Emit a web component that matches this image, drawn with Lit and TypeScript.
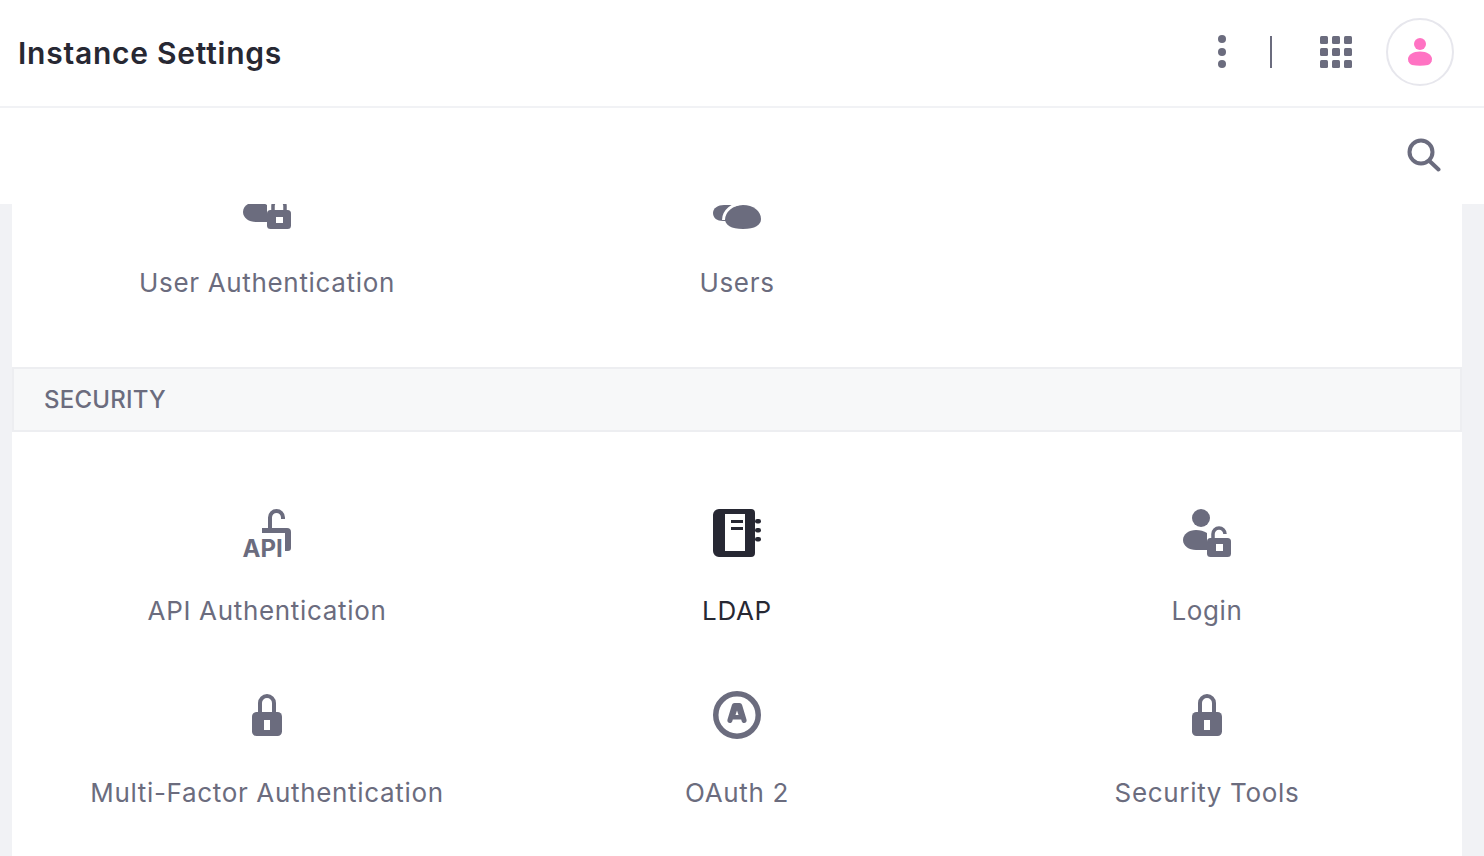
import { LitElement, html, css, svg } from "lit";
import { customElement } from "lit/decorators.js";

const closedLock = svg`<path d="M17 21V12a7 7 0 0 1 14 0v9" fill="none" stroke="currentColor" stroke-width="4"/><rect x="9" y="21" width="30" height="24" rx="4.500" fill="currentColor"/><rect x="21" y="29" width="6" height="10" fill="#fff"/>`;

const icons: Record<string, unknown> = {
  userAuth: svg`<circle cx="18" cy="9" r="9" fill="currentColor"/><path d="M0 31c0-6 6-10 13-10 4 0 8 1 11 3v17c-3 0-7 0-11 0C6 41 0 37 0 31z" fill="currentColor"/><path d="M30 29v-4a6 6 0 0 1 12 0v4" fill="none" stroke="currentColor" stroke-width="3.500"/><rect x="24" y="29" width="24" height="19" rx="3.500" fill="currentColor"/><rect x="33" y="36" width="7" height="6" fill="#fff"/>`,
  users: svg`<circle cx="15" cy="13" r="8" fill="currentColor"/><path d="M0 32c0-5 5-8 11-8h11v16H10C4 40 0 37 0 32z" fill="currentColor"/><path d="M12 38c0-8 8-14 18-14s18 6 18 14c0 6-6 10-18 10S12 44 12 38z" fill="currentColor" stroke="#fff" stroke-width="0"/><path d="M10.500 39c0-9 9-16.500 19.500-16.500" fill="none" stroke="#fff" stroke-width="3"/>`,
  api: svg`<path d="M27 20V8.500a6.500 6.500 0 0 1 13 0V10" fill="none" stroke="currentColor" stroke-width="4"/><path d="M19 19h25a4 4 0 0 1 4 4v16a3 3 0 0 1-3 3h-3V24H19z" fill="currentColor"/><text x="-0.500" y="48" font-family="Inter, sans-serif" font-size="24" font-weight="700" fill="currentColor">API</text>`,
  ldap: svg`<path fill-rule="evenodd" d="M6 0h32a4 4 0 0 1 4 4v40a4 4 0 0 1-4 4H6a6 6 0 0 1-6-6V6a6 6 0 0 1 6-6zM12 5v37h20V5z" fill="currentColor"/><rect x="18" y="11" width="12" height="3" fill="currentColor"/><rect x="18" y="18" width="12" height="3" fill="currentColor"/><rect x="42" y="10" width="6" height="4.500" rx="2.200" fill="currentColor"/><rect x="42" y="19" width="6" height="4.500" rx="2.200" fill="currentColor"/><rect x="42" y="28" width="6" height="4.500" rx="2.200" fill="currentColor"/>`,
  login: svg`<circle cx="18" cy="9" r="9" fill="currentColor"/><path d="M0 31c0-6 6-10 13-10 4 0 8 1 11 3v17c-3 0-7 0-11 0C6 41 0 37 0 31z" fill="currentColor"/><path d="M30 30V25a6 6 0 0 1 12 0" fill="none" stroke="currentColor" stroke-width="3.500"/><rect x="24" y="29" width="24" height="19" rx="3.500" fill="currentColor"/><rect x="33" y="35" width="7" height="7" fill="#fff"/>`,
  lock: closedLock,
  oauth: svg`<circle cx="24" cy="24" r="21.250" fill="none" stroke="currentColor" stroke-width="5.500"/><path fill-rule="evenodd" d="M21.500 12h5c1.200 0 2.200.8 2.600 2l4.400 14.500c.6 2-.7 3.500-2.400 3.500-1.200 0-2.100-.7-2.400-1.800l-.5-1.700h-8.400l-.5 1.700c-.3 1.100-1.200 1.800-2.400 1.800-1.700 0-3-1.500-2.400-3.500l4.400-14.500c.4-1.200 1.400-2 2.600-2zM24 19.500l-1.500 4.500h3z" fill="currentColor"/>`,
};

interface Item { label: string; icon: string; active?: boolean }

const first: Item[] = [
  { label: "User Authentication", icon: "userAuth" },
  { label: "Users", icon: "users" },
];
const security: Item[] = [
  { label: "API Authentication", icon: "api" },
  { label: "LDAP", icon: "ldap", active: true },
  { label: "Login", icon: "login" },
  { label: "Multi-Factor Authentication", icon: "lock" },
  { label: "OAuth 2", icon: "oauth" },
  { label: "Security Tools", icon: "lock" },
];

@customElement("app-root")
export class AppRoot extends LitElement {
  static styles = css`
    :host {
      display: flex;
      flex-direction: column;
      height: 856px;
      overflow: hidden;
      font-family: Inter, "Liberation Sans", sans-serif;
      color: #6b6c7e;
      background: #f1f2f5;
    }
    .top {
      flex: none;
      height: 104px;
      display: flex;
      align-items: center;
      padding: 0 30px 2px 18px;
      background: #fff;
      border-bottom: 2px solid #f1f2f5;
    }
    h1 {
      margin: 0;
      padding-top: 2px;
      flex: 1;
      font-size: 30px;
      font-weight: 600;
      letter-spacing: 0.76px;
      color: #272833;
    }
    .top svg { display: block; }
    .kebab { margin-right: 44px; }
    .sep { width: 2px; height: 32px; background: #6b6c7e; margin-right: 48px; }
    .apps { margin-right: 34px; }
    .avatar {
      width: 68px;
      height: 68px;
      box-sizing: border-box;
      border: 2px solid #e7e7ed;
      border-radius: 50%;
      display: flex;
      align-items: center;
      justify-content: center;
    }
    .sub {
      flex: none;
      height: 94px;
      display: flex;
      align-items: center;
      justify-content: flex-end;
      padding: 0 43px 2px 0;
      background: #fff;
    }
    .main {
      flex: 1;
      min-height: 0;
      overflow: hidden;
      padding: 0 22px 0 12px;
    }
    .sheet {
      height: 100%;
      overflow: hidden;
      background: #fff;
    }
    .grid {
      display: grid;
      grid-template-columns: repeat(3, 470px);
      padding: 0 20px;
    }
    .grid.first { margin-top: -23px; padding-bottom: 4px; }
    .grid.second { padding-top: 77px; }
    .item {
      height: 182px;
      display: flex;
      flex-direction: column;
      align-items: center;
    }
    .item svg { display: block; color: #6b6c7e; }
    .item span {
      margin-top: 36px;
      font-size: 26px;
      line-height: 36px;
      letter-spacing: 0.67px;
      color: #6b6c7e;
    }
    .item.active svg { color: #272833; }
    .item.active span { color: #272833; }
    .head {
      height: 65px;
      box-sizing: border-box;
      display: flex;
      align-items: center;
      padding-left: 30px;
      background: #f7f8f9;
      border: 2px solid #edeef1;
      font-size: 24px;
      font-weight: 500;
      letter-spacing: 0.2px;
      color: #6b6c7e;
    }
  `;

  private renderItems(items: Item[]) {
    return items.map(
      (i) => html`<div class="item ${i.active ? "active" : ""}">
        <svg width="48" height="48" viewBox="0 0 48 48" overflow="visible">${icons[i.icon]}</svg>
        <span>${i.label}</span>
      </div>`
    );
  }

  render() {
    return html`
      <header class="top">
        <h1>Instance Settings</h1>
        <svg class="kebab" width="8" height="34" viewBox="0 0 8 34" fill="#6b6c7e">
          <circle cx="4" cy="4" r="4" /><circle cx="4" cy="17" r="4" /><circle cx="4" cy="29" r="4" />
        </svg>
        <div class="sep"></div>
        <svg class="apps" width="32" height="32" viewBox="0 0 32 32" fill="#6b6c7e">
          ${[0, 12, 24].flatMap((y) =>
            [0, 12, 24].map((x) => svg`<rect x=${x} y=${y} width="8" height="8" rx="1.500" />`)
          )}
        </svg>
        <div class="avatar">
          <svg width="24" height="28" viewBox="0 0 24 28" fill="#ff73c3">
            <circle cx="12" cy="6" r="6" />
            <path d="M0 21c0-4 5-7.500 12-7.500S24 17 24 21c0 3-2 5.500-4 6-5 1-11 1-16 0-2-.5-4-3-4-6z" />
          </svg>
        </div>
      </header>
      <div class="sub">
        <svg width="34" height="34" viewBox="0 0 34 34" fill="none" stroke="#6b6c7e" stroke-width="4" stroke-linecap="round">
          <circle cx="14" cy="14" r="11.500" />
          <path d="M22.500 23l9 8.500" />
        </svg>
      </div>
      <main class="main">
        <div class="sheet">
          <div class="grid first">${this.renderItems(first)}</div>
          <div class="head">SECURITY</div>
          <div class="grid second">${this.renderItems(security)}</div>
        </div>
      </main>
    `;
  }
}
